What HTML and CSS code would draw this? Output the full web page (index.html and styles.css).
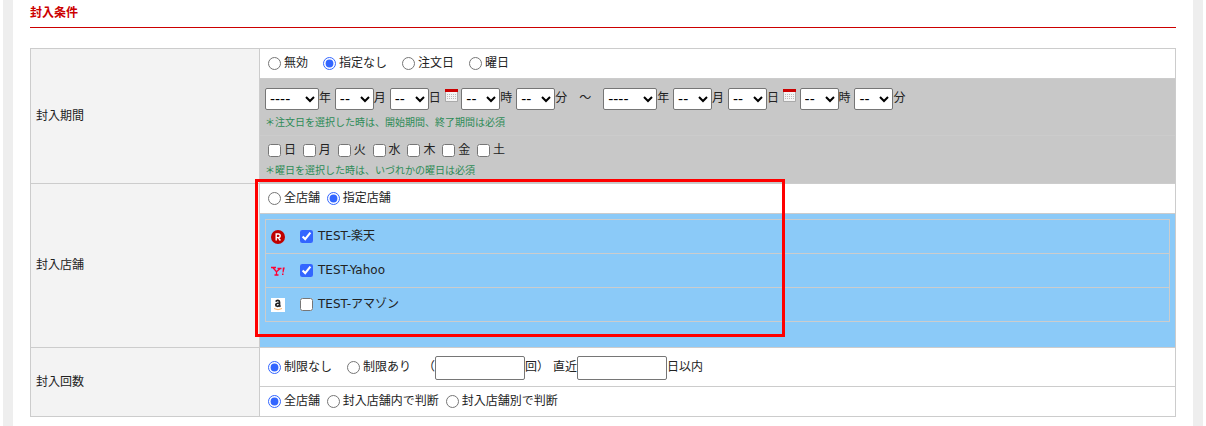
FILE: index.html
```html
<!DOCTYPE html>
<html lang="ja">
<head>
    <meta charset="utf-8">
    <title>封入条件</title>
    <link rel="stylesheet" href="styles.css">
</head>
<body>
    <div class="container">
        <h2 class="section_title">封入条件</h2>

        <form class="condition">
            <table class="condition_table">
                <!-- 封入期間 -->
                <tr>
                    <th rowspan="3" scope="rowgroup">封入期間</th>
                    <td><label><input type="radio" name="period">無効</label>&#12288;<label><input type="radio" name="period" checked>指定なし</label>&#12288;<label><input type="radio" name="period">注文日</label>&#12288;<label><input type="radio" name="period">曜日</label></td>
                </tr>
                <tr class="disabled">
                    <td>
                        <div class="dates">
                            <label><select class="year"><option>----</option></select>年</label>
                            <label><select><option>--</option></select>月</label>
                            <label><select><option>--</option></select>日</label>
                            <button type="button" class="calendar" aria-label="開始日"><svg width="13" height="13" viewBox="0 0 13 13"><rect y="2" width="13" height="11" rx="1" fill="#aaa"/><rect x="1" y="2" width="11" height="10" fill="#f4f4f4"/><path d="M2 5.5h9M2 7.5h9M2 9.5h9" stroke="#bbb" stroke-dasharray="1 1"/><rect width="13" height="3" fill="#c00"/></svg></button>
                            <label><select><option>--</option></select>時</label>
                            <label><select><option>--</option></select>分</label>&#12288;～&#12288;<label><select class="year"><option>----</option></select>年</label>
                            <label><select><option>--</option></select>月</label>
                            <label><select><option>--</option></select>日</label>
                            <button type="button" class="calendar" aria-label="終了日"><svg width="13" height="13" viewBox="0 0 13 13"><rect y="2" width="13" height="11" rx="1" fill="#aaa"/><rect x="1" y="2" width="11" height="10" fill="#f4f4f4"/><path d="M2 5.5h9M2 7.5h9M2 9.5h9" stroke="#bbb" stroke-dasharray="1 1"/><rect width="13" height="3" fill="#c00"/></svg></button>
                            <label><select><option>--</option></select>時</label>
                            <label><select><option>--</option></select>分</label>
                        </div>
                        <p class="note">＊注文日を選択した時は、開始期間、終了期間は必須</p>
                    </td>
                </tr>
                <tr class="disabled">
                    <td>
                        <label><input type="checkbox">日</label>
                        <label><input type="checkbox">月</label>
                        <label><input type="checkbox">火</label>
                        <label><input type="checkbox">水</label>
                        <label><input type="checkbox">木</label>
                        <label><input type="checkbox">金</label>
                        <label><input type="checkbox">土</label>
                        <p class="note">＊曜日を選択した時は、いづれかの曜日は必須</p>
                    </td>
                </tr>

                <!-- 封入店舗 -->
                <tr>
                    <th rowspan="2" scope="rowgroup">封入店舗</th>
                    <td>
                        <label><input type="radio" name="shop">全店舗</label>
                        <label><input type="radio" name="shop" checked>指定店舗</label>
                    </td>
                </tr>
                <tr class="selected">
                    <td>
                        <ul class="shops">
                            <li>
                                <svg width="14" height="14" viewBox="0 0 14 14"><circle cx="7" cy="7" r="7" fill="#bf0000"/><path d="M5.2 10.5V4h2.2a1.7 1.7 0 0 1 0 3.6H5.2M7.2 7.6l2.2 2.9" fill="none" stroke="#fff" stroke-width="1.4"/></svg>
                                <label><input type="checkbox" checked>TEST-楽天</label>
                            </li>
                            <li>
                                <svg width="14" height="14" viewBox="0 0 14 14"><path d="M0 3.5h5M6.5 4.5h4M1.8 3.5l3.7 4.2M9.2 4.5L5.5 7.7V11M3.5 11h4" fill="none" stroke="#f03" stroke-width="1.3"/><path d="M11.8 3.5h2l-1.3 5h-1zM11 9.5h1.5V11H11z" fill="#f03"/></svg>
                                <label><input type="checkbox" checked>TEST-Yahoo</label>
                            </li>
                            <li>
                                <svg width="14" height="14" viewBox="0 0 14 14"><rect width="14" height="14" fill="#fff"/><path d="M4.8 3.6C5.6 1.8 8.5 2 8.5 4v3.6l1 1M8.5 5C6 5 4.8 5.6 4.8 7s2.6 2 3.7 0" fill="none" stroke="#222" stroke-width="1.7"/><path d="M3 10.5q4 2.5 8 0" fill="none" stroke="#f7b26a"/></svg>
                                <label><input type="checkbox">TEST-アマゾン</label>
                            </li>
                        </ul>
                    </td>
                </tr>

                <!-- 封入回数 -->
                <tr>
                    <th rowspan="2" scope="rowgroup">封入回数</th>
                    <td class="limits"><label><input type="radio" name="limit" checked>制限なし</label>&#12288;<label><input type="radio" name="limit">制限あり</label>&#12288;<label>（<input type="text">回）</label> <label>直近<input type="text">日以内</label></td>
                </tr>
                <tr>
                    <td>
                        <label><input type="radio" name="judge" checked>全店舗</label>
                        <label><input type="radio" name="judge">封入店舗内で判断</label>
                        <label><input type="radio" name="judge">封入店舗別で判断</label>
                    </td>
                </tr>
            </table>
            <div class="highlight"></div>
        </form>
    </div>
</body>
</html>
```
FILE: styles.css
```css
body {
    margin: 0 3px;
    background-color: #fff;
    color: #222;
    font-family: "DejaVu Sans", "Noto Sans CJK JP", sans-serif;
    font-size: 12px;
    line-height: 19px;
    text-spacing-trim: space-all; /* 全角括弧を詰めない */
}

.container {
    box-sizing: border-box;
    min-height: 100vh;
    padding: 4px 17px 9px;
    border: solid #eee;
    border-width: 0 10px;
}

.section_title {
    margin: 0 0 20px;
    padding-bottom: 4px;
    border-bottom: 1px solid #c00;
    color: #c00;
    font-size: 12px;
}

.condition {
    position: relative;
}

.condition_table {
    width: 100%;
    border-collapse: collapse;
}

.condition_table th,
.condition_table td {
    padding: 5px;
    border: 1px solid #ccc;
    text-align: left;
}

.condition_table th {
    width: 218px;
    background-color: #f3f3f3;
    font-weight: normal;
}

.condition_table .disabled td {
    background-color: #c8c8c8;
}

.condition_table .selected td {
    background-color: #8bcaf8;
}

input[type="radio"],
input[type="checkbox"] {
    width: 13px;
    height: 13px;
    margin: 0 3px;
    vertical-align: middle;
    accent-color: #36f;
}

input[type="text"] {
    box-sizing: border-box;
    width: 90px;
    height: 24px;
    border: 1px solid #767676;
    border-radius: 2px;
    vertical-align: middle;
}

select {
    box-sizing: border-box;
    width: 39px;
    height: 22px;
    margin: 0;
    border: 1px solid #767676;
    border-radius: 2px;
    background-color: #fff;
    color: #000;
    font-family: inherit;
    font-size: 14px;
    vertical-align: middle;
}

.year {
    width: 54px;
}

.dates,
.limits {
    line-height: 28px;
}

.calendar {
    padding: 0;
    border: 0;
    background: none;
    line-height: 0;
    cursor: pointer;
}

.note {
    margin: 0;
    padding-top: 4px;
    color: #2e8b57;
    font-size: 10px;
    line-height: 14px;
}

.shops {
    margin: 0 0 20px;
    padding: 0;
    border: 1px solid #ccc;
    list-style: none;
}

.shops li {
    display: flex;
    align-items: center;
    gap: 12px;
    height: 33px;
    padding: 0 5px;
}

.shops li + li {
    border-top: 1px solid #ccc;
}

.shops input {
    margin-right: 5px;
}

/* 店舗選択の強調枠 */
.highlight {
    position: absolute;
    top: 131px;
    left: 225px;
    box-sizing: border-box;
    width: 530px;
    height: 158px;
    border: 3px solid #f00;
    pointer-events: none;
}
```
